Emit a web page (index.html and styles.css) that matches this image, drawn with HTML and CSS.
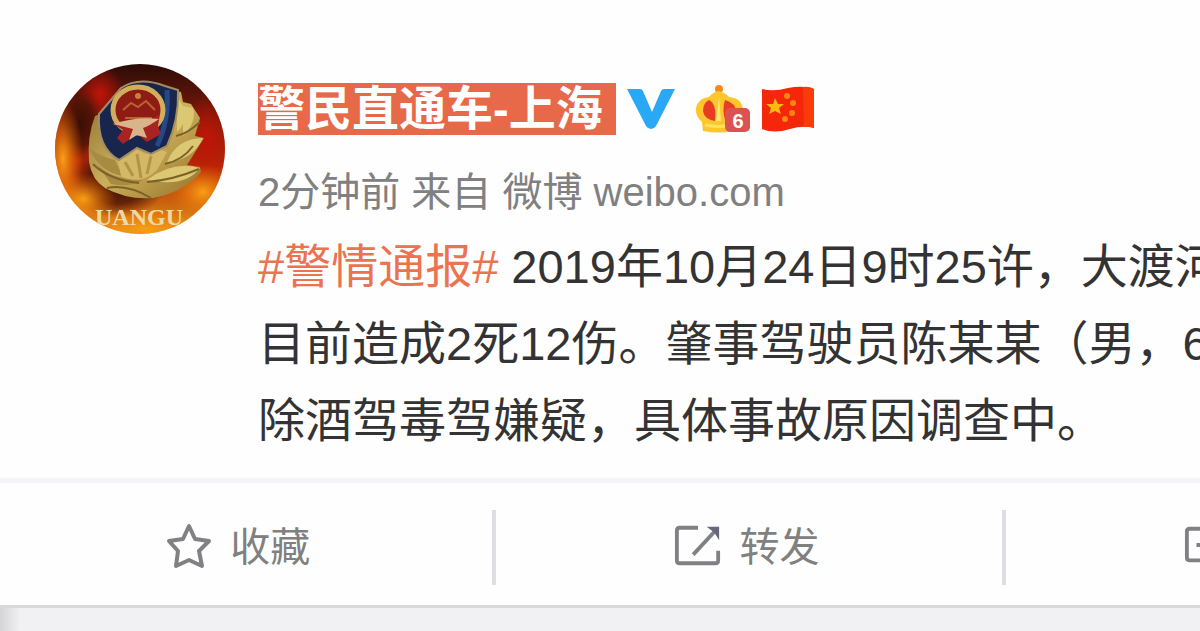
FILE: index.html
```
<!DOCTYPE html>
<html lang="zh-CN">
<head>
    <meta charset="UTF-8">
    <meta name="viewport" content="width=device-width, initial-scale=1.0">
    <title>警民直通车-上海</title>
    <link rel="stylesheet" href="styles.css">
</head>
<body>
    <article class="card">
        <div class="post">
            <a class="avatar" href="#" aria-label="警民直通车-上海">
                <svg viewBox="0 0 170 170">
                    <defs>
                        <clipPath id="round"><circle cx="85" cy="85" r="85"/></clipPath>
                        <linearGradient id="sky" x1="0" y1="0" x2="0" y2="1">
                            <stop offset="0" stop-color="#2a0c08"/>
                            <stop offset="0.25" stop-color="#6c1608"/>
                            <stop offset="0.6" stop-color="#b92a06"/>
                            <stop offset="0.82" stop-color="#c9640f"/>
                            <stop offset="1" stop-color="#e5a020"/>
                        </linearGradient>
                        <linearGradient id="gold" x1="0" y1="0" x2="1" y2="1">
                            <stop offset="0" stop-color="#8c6c30"/>
                            <stop offset="0.5" stop-color="#cbb05a"/>
                            <stop offset="1" stop-color="#94702a"/>
                        </linearGradient>
                        <radialGradient id="flame">
                            <stop offset="0" stop-color="#f7a016"/>
                            <stop offset="1" stop-color="#f06a05" stop-opacity="0"/>
                        </radialGradient>
                        <radialGradient id="shade">
                            <stop offset="0" stop-color="#3a0e05"/>
                            <stop offset="0.6" stop-color="#4a1306" stop-opacity="0.8"/>
                            <stop offset="1" stop-color="#5a1808" stop-opacity="0"/>
                        </radialGradient>
                        <radialGradient id="red">
                            <stop offset="0" stop-color="#c01408"/>
                            <stop offset="1" stop-color="#c01408" stop-opacity="0"/>
                        </radialGradient>
                    </defs>
                    <g clip-path="url(#round)">
                        <rect width="170" height="170" fill="url(#sky)"/>
                        <ellipse cx="45" cy="30" rx="24" ry="30" fill="url(#red)"/>
                        <ellipse cx="152" cy="75" rx="26" ry="45" fill="url(#red)"/>
                        <ellipse cx="26" cy="60" rx="22" ry="36" fill="url(#shade)"/>
                        <ellipse cx="62" cy="118" rx="50" ry="36" fill="url(#shade)"/>
                        <ellipse cx="8" cy="95" rx="20" ry="58" fill="url(#flame)"/>
                        <ellipse cx="28" cy="135" rx="34" ry="26" fill="url(#flame)"/>
                        <ellipse cx="148" cy="128" rx="34" ry="28" fill="url(#flame)"/>
                        <ellipse cx="90" cy="165" rx="70" ry="22" fill="url(#flame)"/>
                        <!-- pine leaves -->
                        <path d="M40 52 Q32 72 34 98 Q37 116 50 124 Q72 136 98 134 Q130 128 146 108 L145 103 L132 101 L149 74 L140 72 L145 54 L136 40 L128 38 L126 28 L110 24 Z" fill="url(#gold)"/>
                        <path d="M122 32 L122 68 Q132 60 128 42 Z M128 42 L128 72 Q142 58 138 44 Z M112 98 Q122 74 148 74 Q138 96 112 98 Z M92 116 Q118 96 145 104 Q130 124 92 116 Z" fill="#dcc873"/>
                        <path d="M34 84 Q44 92 60 96 L68 112 Q44 108 34 84 Z M42 100 Q56 116 88 116 Q74 124 56 120 Z" fill="#a98a42"/>
                        <path d="M121 72 Q132 70 145 58 M110 100 Q128 96 138 82 M92 118 Q118 116 144 105 M38 100 Q54 116 84 119 M52 124 Q72 120 96 134" fill="none" stroke="#7c6228" stroke-width="2"/>
                        <path d="M62 92 L72 94 L80 84 L90 90 L100 84 L112 88 L102 106 Q86 122 66 112 Z" fill="#d3b865"/>
                        <path d="M70 98 L78 112 M82 90 L86 114 M96 92 L92 110" stroke="#b3924a" stroke-width="3"/>
                        <!-- shield -->
                        <path d="M44 50 Q56 36 66 24 Q84 12 110 22 L123 26 Q124 56 112 82 L96 90 L82 84 L64 96 Q42 84 44 50 Z" fill="#18254c" stroke="#a08d64" stroke-width="2"/>
                        <path d="M112 26 Q114 58 102 82" fill="none" stroke="#24498a" stroke-width="5"/>
                        <ellipse cx="83" cy="46" rx="25" ry="23" fill="#8e1b14" stroke="#d2ad5b" stroke-width="5"/>
                        <path d="M68 46 L76 39 L83 43 L91 37 L100 46 M70 54 H97" fill="none" stroke="#ba6232" stroke-width="2"/>
                        <circle cx="83" cy="32" r="3" fill="#c9803c"/>
                        <path d="M57 59 Q82 68 105 50 L103 62 L106 70 L92 78 L82 70 L68 80 L62 74 L68 66 Z" fill="#a92322"/>
                        <path d="M58 60 Q82 52 104 55 Q94 62 88 64 L92 74 L82 71 L74 76 L78 65 Z" fill="#d9b48b"/>
                        <text class="avatar-text" x="84" y="161" text-anchor="middle">UANGU</text>
                    </g>
                </svg>
            </a>
            <div class="content">
                <div class="author">
                    <a class="name" href="#">警民直通车-上海&nbsp;</a>
                    <svg class="verified" viewBox="0 0 48 42" role="img" aria-label="认证">
                        <path d="M0 1 H13 Q15 1 16 3 L25 24 L34 3 Q35 1 37 1 H48 L29 38 Q27 41 24 41 Q21 41 19 38 Z" fill="#29a9f5"/>
                    </svg>
                    <svg class="member" viewBox="0 0 56 48" role="img" aria-label="会员 6">
                        <circle cx="24" cy="4" r="4" fill="#f58a1c"/>
                        <path d="M24 6 Q31 8 34 12 Q47 13 48 25 Q47 34 42 38 L40 46 Q24 49 8 46 L7 37 Q0 31 1 23 Q3 13 14 12 Q18 7 24 6 Z" fill="#fdc62d"/>
                        <path d="M14 15 Q22 19 20 36 Q9 34 8 26 Q8 18 14 15 Z M30 15 Q41 18 41 27 Q39 34 30 35 Q27 24 30 15 Z" fill="#e83d24"/>
                        <path d="M24 12 L26 36 H21 Z" fill="#ffe774"/>
                        <path d="M10 40 Q24 43 36 40" fill="none" stroke="#ffe35a" stroke-width="3"/>
                        <rect x="30" y="23" width="25" height="24" rx="5" fill="#dc5252"/>
                        <text class="level" x="43" y="43" text-anchor="middle">6</text>
                    </svg>
                    <svg class="flag" viewBox="0 0 54 46" role="img" aria-label="国旗">
                        <path d="M1 3 Q13 6 27 2 Q42 -1 53 3 V42 Q42 39 29 43 Q13 48 1 43 Z" fill="#f5270b"/>
                        <path d="M42 1 Q48 0 53 3 V42 Q48 40 43 41 Z" fill="#fa3b08"/>
                        <path d="M14 12 L17 18 L23 18 L18 22 L20 28 L14 25 L8 28 L10 22 L5 18 L12 18 Z" fill="#ffb90f"/>
                        <g fill="#fd8610">
                            <circle cx="26" cy="10" r="3"/>
                            <circle cx="32" cy="17" r="3"/>
                            <circle cx="31" cy="27" r="3"/>
                            <circle cx="24" cy="33" r="3"/>
                        </g>
                    </svg>
                </div>
                <div class="meta">2分钟前 来自 <a href="#">微博 weibo.com</a></div>
                <p class="text">
                    <a class="topic" href="#">#警情通报#</a> 2019年10月24日9时25许，大渡河<br>
                    目前造成2死12伤。肇事驾驶员陈某某（男，6<br>
                    除酒驾毒驾嫌疑，具体事故原因调查中。
                </p>
            </div>
        </div>
        <div class="actions">
            <button type="button">
                <svg class="star" viewBox="0 0 46 46"><path d="M23 3 L29 16 L43 18 L33 28 L36 43 L23 37 L10 43 L12 28 L3 18 L17 16 Z"/></svg>
                <span>收藏</span>
            </button>
            <button type="button">
                <svg class="share" viewBox="0 0 50 46"><path d="M25 4 H6 Q3 4 3 7 V38 Q3 41 6 41 H43 Q46 41 46 38 V28 M20 32 L44 6"/><path class="tip" d="M34 3 H47 V17 L42 9 Z"/></svg>
                <span>转发</span>
            </button>
            <button type="button">
                <svg class="comment" viewBox="0 0 50 46"><path d="M6 5 H43 Q46 5 46 8 V35 Q46 38 43 38 H28 L23 43 L18 38 H6 Q3 38 3 35 V8 Q3 5 6 5 Z M13 22 H18 M23 22 H27 M32 22 H37"/></svg>
                <span>评论</span>
            </button>
        </div>
    </article>
</body>
</html>
```
FILE: styles.css
```
* {
    box-sizing: border-box;
}
body {
    margin: 0;
    min-height: 100vh;
    overflow: hidden;
    background: linear-gradient(to right, #d4d4d6, #f1f0f3 20px);
    font-family: "Liberation Sans", "Noto Sans CJK SC", sans-serif;
    color: #333;
}
a {
    color: inherit;
    text-decoration: none;
}
svg {
    display: block;
    flex: none;
}
.card {
    overflow: hidden;
    background-color: #fefefe;
    border-bottom: 3px solid #d9d8db;
}
.post {
    display: flex;
    gap: 33px;
    padding: 64px 0 19px 55px;
}
.avatar {
    flex: none;
    width: 170px;
    height: 170px;
}
.avatar-text {
    font-family: "Liberation Serif", serif;
    font-size: 24px;
    font-weight: bold;
    fill: #ecd9a4;
}
.content {
    flex: 1;
    min-width: 0;
    padding-top: 19px;
    white-space: nowrap;
}
.author {
    display: flex;
    align-items: center;
    height: 52px;
}
.name {
    height: 52px;
    line-height: 52px;
    font-size: 47px;
    font-weight: bold;
    color: #fff;
    background-color: #e8694a;
}
.verified {
    width: 48px;
    height: 42px;
    margin-left: 11px;
}
.member {
    width: 56px;
    height: 48px;
    margin-left: 20px;
}
.level {
    font-size: 20px;
    font-weight: bold;
    fill: #fff;
}
.flag {
    width: 54px;
    height: 46px;
    margin-left: 10px;
}
.meta {
    margin-top: 29px;
    line-height: 56px;
    font-size: 40px;
    color: #808080;
}
.text {
    margin: 8px 0 0;
    line-height: 77px;
    font-size: 47px;
}
.topic {
    color: #eb7350;
}
.actions {
    display: flex;
    width: 127%;
    margin-left: -13px;
    padding: 27px 0 20px;
    border-top: 5px solid #f6f4f8;
}
.actions button {
    flex: 1;
    display: flex;
    justify-content: center;
    align-items: center;
    gap: 17px;
    height: 75px;
    padding: 0 4px 4px 0;
    border: none;
    border-right: 4px solid #dfdde1;
    background: none;
    font-family: inherit;
    font-size: 40px;
    color: #808080;
    cursor: pointer;
}
.actions button:last-child {
    border-right: none;
}
.actions span {
    padding-bottom: 4px;
}
.actions svg {
    width: 48px;
    height: 46px;
    fill: none;
    stroke: #808085;
    stroke-width: 4;
    stroke-linejoin: round;
}
.actions .tip {
    fill: #66667c;
    stroke: none;
}
```
